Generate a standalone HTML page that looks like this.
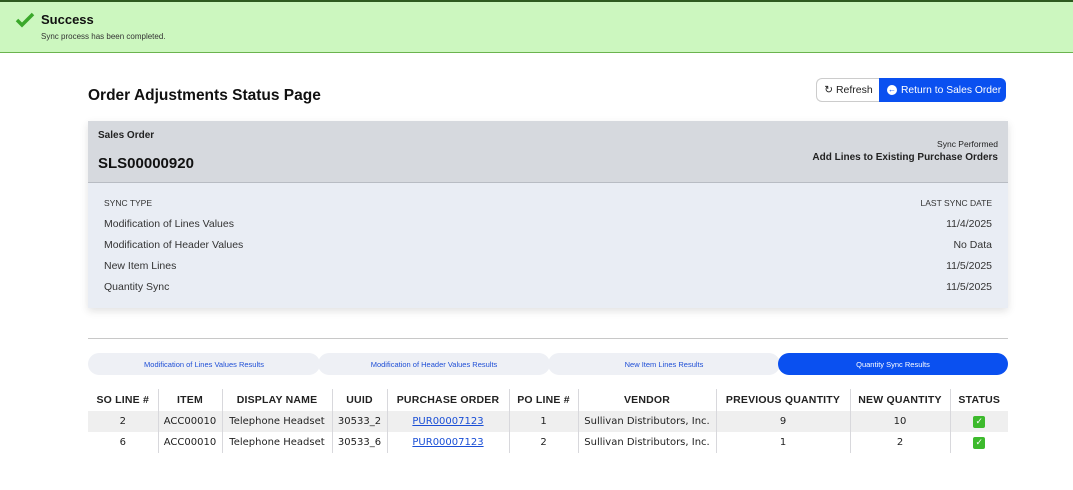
<!DOCTYPE html>
<html><head><style>
*{box-sizing:border-box;margin:0;padding:0}
body{width:1073px;height:490px;background:#fff;font-family:"Liberation Sans",sans-serif;color:#222;position:relative;overflow:hidden}
.banner{position:absolute;left:0;top:0;width:1073px;height:53px;background:#ccf7bf;border-top:2px solid #2d5a1f;border-bottom:1px solid #6bb34e}
.abs{position:absolute;white-space:nowrap}
.btn{position:absolute;top:78px;height:24px;font-size:10.5px;display:flex;align-items:center;white-space:nowrap}
.tab{position:absolute;top:353px;height:22px;border-radius:11px;background:#eef0f5;font-size:7.5px;color:#1f4fd6;display:flex;align-items:center;justify-content:center}
table{position:absolute;left:88px;top:389px;width:920px;border-collapse:collapse;font-size:10.5px;table-layout:fixed}
th{height:22px;font-weight:bold;font-size:10.5px;letter-spacing:.2px;border-left:1px solid #d8d8dc;white-space:nowrap}
td{height:21px;text-align:center;border-left:1px solid #d8d8dc;font-family:"DejaVu Sans",sans-serif;font-size:10px;white-space:nowrap}
th:first-child,td:first-child{border-left:none}
tr.g td{background:#efefef}
a{color:#1a4fd6;text-decoration:underline}
.ck{display:inline-block;width:12px;height:12px;background:#3dba2d;border-radius:2px;color:#fff;font-size:9px;line-height:12px;font-weight:bold}
.row{position:absolute;font-size:10.5px;color:#333;white-space:nowrap}
</style></head><body>
<div class="banner">
<svg class="abs" style="left:15px;top:10px" width="20" height="16" viewBox="0 0 20 16"><path d="M2 8 L7 13 L18 2" stroke="#3aa82a" stroke-width="3.5" fill="none"/></svg>
<div class="abs" style="left:41px;top:10px;font-size:13px;font-weight:bold;color:#111">Success</div>
<div class="abs" style="left:41px;top:30px;font-size:8px;color:#333">Sync process has been completed.</div>
</div>
<div class="abs" style="left:88px;top:87px;font-size:15.5px;font-weight:bold;color:#111">Order Adjustments Status Page</div>
<div class="btn" style="left:816px;width:64px;border:1px solid #ccc;border-right:none;border-radius:6px 0 0 6px;justify-content:center;color:#222">↻&nbsp;Refresh</div>
<div class="btn" style="left:879px;width:127px;background:#0a50f0;color:#fff;border-radius:0 6px 6px 0;padding-left:8px;font-size:10.3px"><span style="display:inline-block;width:10px;height:10px;border-radius:50%;background:#fff;color:#0a50f0;font-size:8px;line-height:10px;text-align:center;margin-right:4px">←</span>Return to Sales Order</div>
<div class="abs" style="left:88px;top:121px;width:920px;height:187px;background:#e9edf4;box-shadow:0 3px 8px rgba(0,0,0,.12)"></div>
<div class="abs" style="left:88px;top:121px;width:920px;height:62px;background:#d6d9de;border-bottom:1px solid #b8bcc3"></div>
<div class="abs" style="left:98px;top:130px;font-size:10px;font-weight:bold">Sales Order</div>
<div class="abs" style="left:98px;top:155px;font-size:15px;font-weight:bold;color:#111">SLS00000920</div>
<div class="abs" style="right:75px;top:139px;font-size:8.5px">Sync Performed</div>
<div class="abs" style="right:75px;top:152px;font-size:10px;font-weight:bold">Add Lines to Existing Purchase Orders</div>
<div class="row" style="left:104px;top:198px;font-size:8.5px">SYNC TYPE</div>
<div class="row" style="right:81px;top:198px;font-size:8.5px">LAST SYNC DATE</div>
<div class="row" style="left:104px;top:218px">Modification of Lines Values</div><div class="row" style="right:81px;top:218px">11/4/2025</div>
<div class="row" style="left:104px;top:239px">Modification of Header Values</div><div class="row" style="right:81px;top:239px">No Data</div>
<div class="row" style="left:104px;top:260px">New Item Lines</div><div class="row" style="right:81px;top:260px">11/5/2025</div>
<div class="row" style="left:104px;top:281px">Quantity Sync</div><div class="row" style="right:81px;top:281px">11/5/2025</div>
<div class="abs" style="left:88px;top:338px;width:920px;height:1px;background:#c8c8c8"></div>
<div class="tab" style="left:88px;width:232px">Modification of Lines Values Results</div>
<div class="tab" style="left:318px;width:232px">Modification of Header Values Results</div>
<div class="tab" style="left:548px;width:232px">New Item Lines Results</div>
<div class="tab" style="left:778px;width:230px;background:#0a50f0;color:#fff">Quantity Sync Results</div>
<table>
<colgroup><col style="width:70px"><col style="width:64px"><col style="width:110px"><col style="width:55px"><col style="width:122px"><col style="width:69px"><col style="width:138px"><col style="width:134px"><col style="width:100px"><col style="width:58px"></colgroup>
<tr><th>SO LINE #</th><th>ITEM</th><th>DISPLAY NAME</th><th>UUID</th><th>PURCHASE ORDER</th><th>PO LINE #</th><th>VENDOR</th><th>PREVIOUS QUANTITY</th><th>NEW QUANTITY</th><th>STATUS</th></tr>
<tr class="g"><td>2</td><td>ACC00010</td><td>Telephone Headset</td><td>30533_2</td><td><a>PUR00007123</a></td><td>1</td><td>Sullivan Distributors, Inc.</td><td>9</td><td>10</td><td><span class="ck">✓</span></td></tr>
<tr><td>6</td><td>ACC00010</td><td>Telephone Headset</td><td>30533_6</td><td><a>PUR00007123</a></td><td>2</td><td>Sullivan Distributors, Inc.</td><td>1</td><td>2</td><td><span class="ck">✓</span></td></tr>
</table>
</body></html>
